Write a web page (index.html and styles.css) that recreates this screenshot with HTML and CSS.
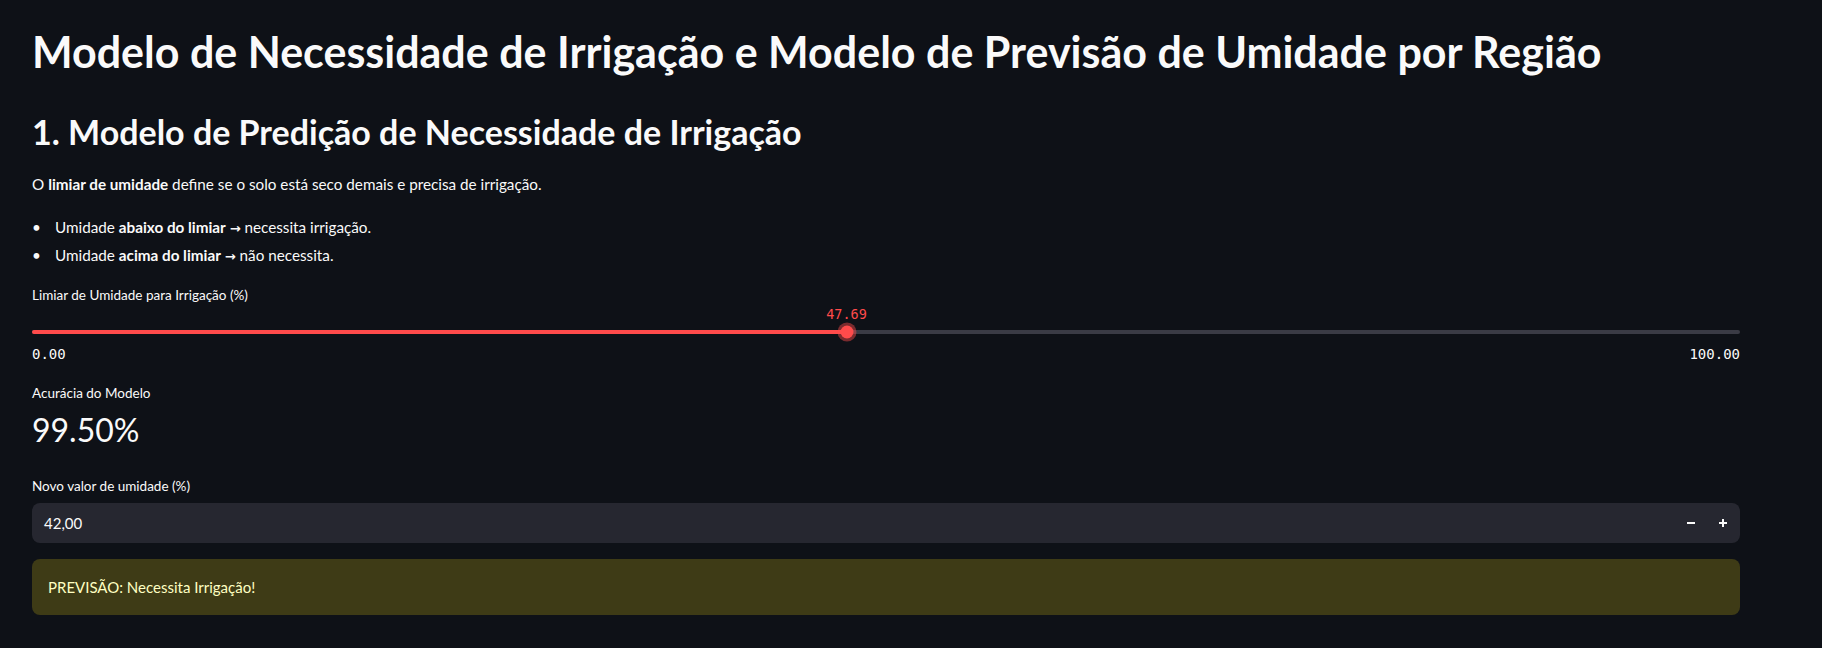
FILE: index.html
```html
<!DOCTYPE html>
<html lang="pt-BR">
<head>
<meta charset="utf-8">
<title>Modelo de Irrigação</title>
<link rel="stylesheet" href="styles.css">
</head>
<body>
<main class="main">
  <h1 class="title">Modelo de Necessidade de Irrigação e Modelo de Previsão de Umidade por Região</h1>
  <h2 class="subtitle">1. Modelo de Predição de Necessidade de Irrigação</h2>
  <p class="text">O <strong>limiar de umidade</strong> define se o solo está seco demais e precisa de irrigação.</p>
  <ul class="list">
    <li class="list-item"><span>Umidade <strong>abaixo do limiar</strong> <span class="arrow">→</span> necessita irrigação.</span></li>
    <li class="list-item"><span>Umidade <strong>acima do limiar</strong> <span class="arrow">→</span> não necessita.</span></li>
  </ul>

  <div class="widget-label label-slider">Limiar de Umidade para Irrigação (%)</div>
  <div class="slider">
    <div class="slider-value-row">
      <span class="slider-value" style="left: 47.69%">47.69</span>
    </div>
    <div class="slider-track-area">
      <div class="slider-track">
        <div class="slider-fill" style="width: 47.69%"></div>
      </div>
      <div class="slider-thumb" style="left: 47.69%"></div>
    </div>
    <div class="slider-range">
      <span>0.00</span>
      <span>100.00</span>
    </div>
  </div>

  <div class="widget-label label-metric">Acurácia do Modelo</div>
  <div class="metric-value">99.50%</div>

  <div class="widget-label label-input">Novo valor de umidade (%)</div>
  <div class="number-input">
    <span class="number-value">42,00</span>
    <button class="step-btn" aria-label="Diminuir">
      <svg width="10" height="10" viewBox="0 0 10 10"><path d="M1 5h8" stroke="#fafafa" stroke-width="2"/></svg>
    </button>
    <button class="step-btn" aria-label="Aumentar">
      <svg width="10" height="10" viewBox="0 0 10 10"><path d="M1 5h8M5 1v8" stroke="#fafafa" stroke-width="2"/></svg>
    </button>
  </div>

  <div class="alert-warning">PREVISÃO: Necessita Irrigação!</div>
</main>
</body>
</html>
```
FILE: styles.css
```css
html, body {
  margin: 0;
  padding: 0;
  background: #0e1117;
  min-height: 100%;
}
body {
  color: #fafafa;
  font-family: Lato, "Noto Sans", sans-serif;
  font-size: 15.25px;
}
.main {
  padding: 26px 82px 0 32px;
  display: flex;
  flex-direction: column;
}
.title {
  margin: 0;
  font-size: 43px;
  font-weight: 700;
  line-height: 52px;
  white-space: nowrap;
}
.subtitle {
  margin: 33px 0 0;
  font-size: 34px;
  font-weight: 700;
  line-height: 41px;
}
.text {
  margin: 20px 0 0;
  line-height: 24px;
}
strong {
  font-weight: 700;
}
.arrow {
  font-family: "DejaVu Sans", sans-serif;
  font-size: 13px;
  font-weight: 700;
  line-height: 1;
}
.list {
  list-style: none;
  margin: 19px 0 0;
  padding: 0;
}
.list-item {
  display: flex;
  line-height: 24px;
  height: 24px;
  margin-bottom: 4.4px;
}
.list-item::before {
  content: "•";
  width: 23px;
  flex: none;
}
.widget-label {
  font-size: 13.5px;
  line-height: 21.6px;
}
.label-slider {
  margin-top: 13px;
}
.slider {
  display: flex;
  flex-direction: column;
}
.slider-value-row {
  position: relative;
  height: 16px;
}
.slider-value {
  position: absolute;
  top: 0;
  transform: translateX(-50%);
  font-family: "DejaVu Sans Mono", "Liberation Mono", monospace;
  font-size: 13.5px;
  line-height: 16px;
  color: #ff4b4b;
}
.slider-track-area {
  position: relative;
  height: 20px;
  display: flex;
  align-items: center;
}
.slider-track {
  flex: 1;
  height: 4px;
  border-radius: 2px;
  background: #3a3b45;
  overflow: hidden;
}
.slider-fill {
  height: 100%;
  background: #ff4b4b;
}
.slider-thumb {
  position: absolute;
  top: 50%;
  width: 13px;
  height: 13px;
  border-radius: 50%;
  background: #ff4b4b;
  box-shadow: 0 0 0 3px rgba(255, 75, 75, 0.45);
  transform: translate(-50%, -50%);
}
.slider-range {
  margin-top: 4px;
  display: flex;
  justify-content: space-between;
  font-family: "DejaVu Sans Mono", "Liberation Mono", monospace;
  font-size: 14px;
  line-height: 16px;
  color: #fafafa;
}
.label-metric {
  margin-top: 21px;
}
.metric-value {
  margin-top: 6px;
  font-size: 32px;
  line-height: 38px;
  font-weight: 400;
}
.label-input {
  margin-top: 27px;
}
.number-input {
  margin-top: 5px;
  height: 40px;
  background: #262730;
  border-radius: 8px;
  display: flex;
  align-items: center;
  padding: 0 1px 0 12px;
}
.number-value {
  flex: 1;
  font-size: 15px;
}
.step-btn {
  width: 32px;
  height: 40px;
  padding: 0;
  border: 0;
  background: transparent;
  display: flex;
  align-items: center;
  justify-content: center;
  cursor: pointer;
}
.step-btn svg {
  display: block;
}
.alert-warning {
  margin-top: 16px;
  padding: 16px;
  background: #3e3b16;
  color: #ffffc2;
  border-radius: 8px;
  font-size: 15px;
  line-height: 24px;
}
```
